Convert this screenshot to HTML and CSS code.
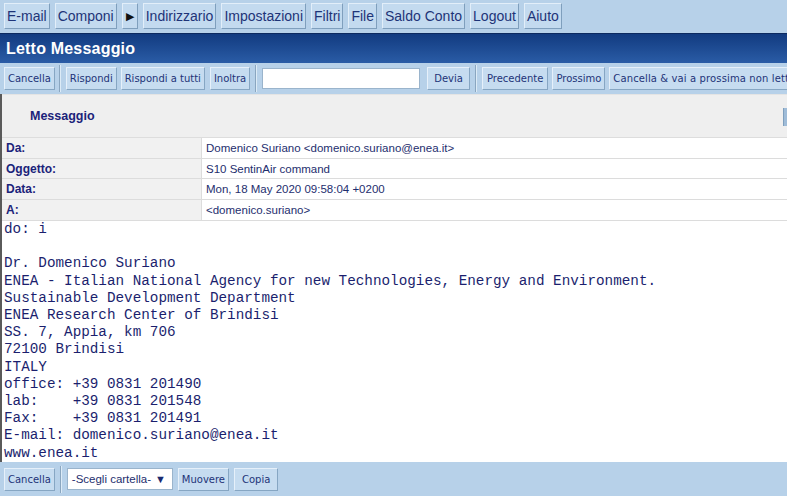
FILE: index.html
```html
<!DOCTYPE html>
<html>
<head>
<meta charset="utf-8">
<link rel="stylesheet" href="styles.css">
</head>
<body>
<div class="nav">
  <span class="nbtn">E-mail</span>
  <span class="nbtn">Componi</span>
  <span class="nbtn arrow">&#9654;</span>
  <span class="nbtn">Indirizzario</span>
  <span class="nbtn">Impostazioni</span>
  <span class="nbtn">Filtri</span>
  <span class="nbtn">File</span>
  <span class="nbtn">Saldo Conto</span>
  <span class="nbtn">Logout</span>
  <span class="nbtn">Aiuto</span>
</div>
<div class="title">Letto Messaggio</div>
<div class="toolbar">
  <span class="tbtn first">Cancella</span>
  <span class="sep"></span>
  <span class="tbtn tight">Rispondi</span>
  <span class="tbtn">Rispondi a tutti</span>
  <span class="tbtn">Inoltra</span>
  <span class="sep"></span>
  <span class="input"></span>
  <span class="tbtn devia">Devia</span>
  <span class="sep"></span>
  <span class="tbtn prec">Precedente</span>
  <span class="tbtn tight">Prossimo</span>
  <span class="tbtn wide">Cancella &amp; vai a prossima non letta</span>
</div>
<div class="main">
  <div class="msghead"><span class="msgtitle">Messaggio</span><span class="edge"></span></div>
  <div class="row"><div class="lbl">Da:</div><div class="val">Domenico Suriano &lt;domenico.suriano@enea.it&gt;</div></div>
  <div class="row r2"><div class="lbl">Oggetto:</div><div class="val">S10 SentinAir command</div></div>
  <div class="row"><div class="lbl">Data:</div><div class="val">Mon, 18 May 2020 09:58:04 +0200</div></div>
  <div class="row"><div class="lbl">A:</div><div class="val">&lt;domenico.suriano&gt;</div></div>
<pre class="body">do: i

Dr. Domenico Suriano
ENEA - Italian National Agency for new Technologies, Energy and Environment.
Sustainable Development Department
ENEA Research Center of Brindisi
SS. 7, Appia, km 706
72100 Brindisi
ITALY
office: +39 0831 201490
lab:    +39 0831 201548
Fax:    +39 0831 201491
E-mail: domenico.suriano@enea.it
www.enea.it</pre>
</div>
<div class="bottombar">
  <span class="tbtn">Cancella</span>
  <span class="sep"></span>
  <span class="select">-Scegli cartella- <span class="caret">&#9660;</span></span>
  <span class="tbtn">Muovere</span>
  <span class="tbtn copia">Copia</span>
</div>
</body>
</html>
```

FILE: styles.css
```css
html, body {
  margin: 0;
  padding: 0;
  width: 787px;
  height: 496px;
  overflow: hidden;
  background: #ffffff;
}
body {
  font-family: "Liberation Sans", Arial, sans-serif;
  color: #1f2f78;
}
.nav {
  height: 33px;
  box-sizing: border-box;
  background: #b7d1e9;
  display: flex;
  align-items: flex-start;
  gap: 5px;
  padding: 3px 0 0 4px;
}
.nbtn {
  height: 26px;
  box-sizing: border-box;
  padding: 0 2px;
  display: flex;
  align-items: center;
  font-size: 14px;
  color: #1e3478;
  background: #c3daef;
  border: 1px solid;
  border-color: #e2eef9 #7f9fbd #7f9fbd #e2eef9;
  white-space: nowrap;
}
.nbtn.arrow {
  font-size: 11px;
  color: #111;
  padding: 0 3px;
}
.title {
  height: 30px;
  box-sizing: border-box;
  background: linear-gradient(#123b80, #2a5ca6);
  border-top: 1px solid #0c2a60;
  color: #ffffff;
  font-weight: bold;
  font-size: 16px;
  display: flex;
  align-items: center;
  padding-left: 6px;
  letter-spacing: 0.2px;
}
.toolbar, .bottombar {
  background: #b7d1e9;
  display: flex;
  align-items: center;
  gap: 5px;
  padding-left: 4px;
  white-space: nowrap;
  overflow: hidden;
}
.toolbar {
  height: 31px;
}
.bottombar {
  height: 34px;
}
.toolbar .first {
  margin-right: -1px;
}
.tbtn {
  height: 23px;
  box-sizing: border-box;
  display: flex;
  align-items: center;
  padding: 0 3px;
  font-family: "DejaVu Sans", Verdana, sans-serif;
  font-size: 10px;
  color: #1e3478;
  background: #c6dcf0;
  border: 1px solid;
  border-color: #e6f0fa #86a6c3 #86a6c3 #e6f0fa;
  flex: none;
}
.tbtn.tight {
  margin-right: -1px;
}
.tbtn.devia {
  margin-left: 2px;
  padding: 0 6px;
}
.tbtn.prec {
  padding: 0 4px;
  margin-right: -1px;
}
.tbtn.wide {
  letter-spacing: 0.12px;
  padding-left: 3px;
}
.tbtn.copia {
  padding: 0 7px;
}
.sep {
  width: 1px;
  height: 27px;
  background: #8aa6c0;
  border-right: 1px solid #dcebf7;
  flex: none;
}
.input {
  width: 158px;
  height: 21px;
  box-sizing: border-box;
  background: #ffffff;
  border: 1px solid #9ab4cc;
  flex: none;
}
.select {
  width: 106px;
  height: 22px;
  box-sizing: border-box;
  background: #ffffff;
  border: 1px solid #9ab4cc;
  display: flex;
  align-items: center;
  justify-content: space-between;
  padding: 0 6px 0 4px;
  font-size: 11.5px;
  color: #1e2e6e;
  flex: none;
}
.caret {
  font-size: 11px;
  color: #1a2a70;
}
.main {
  border-left: 2px solid #5a5a5a;
}
.msghead {
  height: 44px;
  box-sizing: border-box;
  background: #efefef;
  border-top: 1px solid #e4e4e4;
  border-bottom: 1px solid #dddddd;
  display: flex;
  align-items: center;
  padding-left: 28px;
}
.msgtitle {
  font-weight: bold;
  font-size: 12.5px;
  color: #1b237a;
}
.edge {
  margin-left: auto;
  width: 3px;
  height: 18px;
  background: #9fbcd8;
  border-left: 1px solid #7f9fbd;
  margin-top: 2px;
}
.row {
  display: flex;
  height: 21px;
  box-sizing: border-box;
  border-bottom: 1px solid #dcdcdc;
}
.row.r2 {
  height: 20px;
}
.lbl {
  width: 195px;
  background: #f1f1f1;
  border-right: 1px solid #dcdcdc;
  font-weight: bold;
  font-size: 12px;
  color: #1b237a;
  display: flex;
  align-items: center;
  padding-left: 4px;
  flex: none;
}
.val {
  flex: 1;
  display: flex;
  align-items: center;
  padding-left: 4px;
  font-size: 11.5px;
  color: #1e2e6e;
  background: #ffffff;
}
.body {
  margin: 0;
  height: 241px;
  box-sizing: border-box;
  padding: 0 0 0 2px;
  font-family: "Liberation Mono", "Courier New", monospace;
  font-size: 14.3px;
  line-height: 17.2px;
  color: #1b1f6e;
  overflow: hidden;
}
```
